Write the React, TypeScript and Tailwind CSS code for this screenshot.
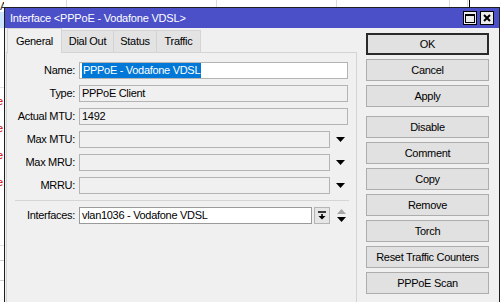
import React from "react";

const font = "font-['Liberation_Sans',Arial,sans-serif] text-[11px] tracking-[-0.3px] text-black";

const Arrow = () => (
  <svg width="9" height="5" viewBox="0 0 9 5">
    <path d="M0 0h9L4.5 5z" fill="#000" />
  </svg>
);

type FieldProps = {
  label: string;
  value?: string;
  white?: boolean;
  selected?: boolean;
  drop?: boolean;
};

const Field: React.FC<FieldProps> = ({ label, value, white, selected, drop }) => (
  <div className="flex items-center h-[17px]">
    <span className="w-[68px] text-right">{label}</span>
    <div
      className={`ml-[4px] h-[17px] border border-[#b4b4b4] pl-[2px] flex items-center ${
        drop ? "w-[251px]" : "w-[269px]"
      } ${white ? "bg-white border-[#9a9a9a]" : "bg-[#f0f0f0]"}`}
    >
      {selected ? (
        <span className="bg-[#0078d7] text-white px-[1px] leading-[15px]">{value}</span>
      ) : (
        <span>{value}</span>
      )}
    </div>
    {drop && (
      <div className="w-[20px] flex justify-center">
        <Arrow />
      </div>
    )}
  </div>
);

const buttons = ["Cancel", "Apply", "Disable", "Comment", "Copy", "Remove", "Torch", "Reset Traffic Counters", "PPPoE Scan"];

export default function App() {
  return (
    <div className={`relative w-[503px] h-[302px] overflow-hidden bg-white ${font}`}>
      {/* background list behind the dialog */}
      <div className="flex flex-col">
        <div className="h-[12px] flex">
          <span className="w-[4px] overflow-hidden leading-[12px] text-[#333]">A</span>
          <div className="w-[63px] border-r border-[#dcdcdc]" />
          <div className="w-[150px] border-r border-[#dcdcdc]" />
          <div className="w-[120px] border-r border-[#dcdcdc]" />
          <div className="w-[113px] border-r border-[#dcdcdc]" />
          <div className="w-[18px] border-r border-[#dcdcdc]" />
          <div className="w-[2px] border-r border-black" />
        </div>
        <div className="h-[16px] w-[4px] bg-[#cde6fb]" />
        <div className="h-[60px] w-[4px] border-b border-[#e4e4e4]" />
        {[0, 1, 2, 3].map((i) => (
          <div key={i} className="h-[27px] w-[4px] overflow-hidden flex items-center">
            <span className="text-[#d40000] -ml-[3px]">e</span>
          </div>
        ))}
        <div className="h-[50px] w-[4px] border-b border-[#e4e4e4]" />
        <div className="h-[15px] w-[4px] border-b border-[#cfcfcf]" />
        <div className="h-[20px] w-[4px] border-b border-[#cfcfcf]" />
      </div>

      {/* dialog window */}
      <div className="absolute left-[4px] top-[7px] w-[496px] h-[330px] border border-[#1e1e1e] bg-[#f0f0f0]">
        <div className="h-[20px] bg-[#4b50c9] flex items-center pl-[5px] pr-[5px] text-white tracking-[-0.2px]">
          <span className="flex-1">Interface &lt;PPPoE - Vodafone VDSL&gt;</span>
          <div className="flex gap-[3px]">
            <div className="w-[14px] h-[14px] bg-[#ececec] border border-black flex items-center justify-center">
              <div className="w-[10px] h-[9px] border border-black border-t-2" />
            </div>
            <div className="w-[14px] h-[14px] bg-[#ececec] border border-black flex items-center justify-center">
              <svg width="8" height="8" viewBox="0 0 8 8">
                <path d="M1 1L7 7M7 1L1 7" stroke="#000" strokeWidth="2" />
              </svg>
            </div>
          </div>
        </div>

        <div className="flex items-start">
          {/* tabs + page */}
          <div className="ml-[1px] w-[351px]">
            <div className="h-[24px] flex items-end pl-[1px]">
              <div className="w-[55px] h-[25px] bg-[#f0f0f0] border border-b-0 border-[#d4d4d4] flex items-center justify-center relative top-[1px]">
                General
              </div>
              <div className="w-[52px] h-[22px] bg-[#e3e3e3] border border-b-0 border-l-0 border-[#d4d4d4] flex items-center justify-center">
                Dial Out
              </div>
              <div className="w-[43px] h-[22px] bg-[#e3e3e3] border border-b-0 border-l-0 border-[#d4d4d4] flex items-center justify-center">
                Status
              </div>
              <div className="w-[44px] h-[22px] bg-[#e3e3e3] border border-b-0 border-l-0 border-[#d4d4d4] flex items-center justify-center">
                Traffic
              </div>
            </div>
            <div className="h-[280px] border border-[#d4d4d4] pt-[9px] flex flex-col gap-[6px]">
              <Field label="Name:" value="PPPoE - Vodafone VDSL" white selected />
              <Field label="Type:" value="PPPoE Client" />
              <Field label="Actual MTU:" value="1492" />
              <Field label="Max MTU:" drop />
              <Field label="Max MRU:" drop />
              <Field label="MRRU:" drop />
              <div className="h-px bg-[#d5d5d5] ml-[8px] w-[334px]" />
              <div className="flex items-center h-[17px]">
                <span className="w-[68px] text-right">Interfaces:</span>
                <div className="ml-[4px] w-[233px] h-[17px] bg-white border border-[#9a9a9a] pl-[2px] flex items-center">
                  vlan1036 - Vodafone VDSL
                </div>
                <div className="ml-[2px] w-[16px] h-[17px] bg-[#e6e6e6] border border-[#b4b4b4] flex items-center justify-center">
                  <svg width="8" height="9" viewBox="0 0 8 9">
                    <path d="M0 1h8" stroke="#000" strokeWidth="1.5" />
                    <path d="M3.2 3h1.6v2H7.5L4 8.5L0.5 5h2.7z" fill="#000" />
                  </svg>
                </div>
                <div className="w-[22px] flex justify-center">
                  <svg width="9" height="13" viewBox="0 0 9 13">
                    <path d="M0 5h9L4.5 0z" fill="#a6a6a6" />
                    <path d="M0 8h9L4.5 13z" fill="#000" />
                  </svg>
                </div>
              </div>
            </div>
          </div>

          {/* action buttons */}
          <div className="ml-[9px] mt-[5px] w-[123px] flex flex-col gap-[4px]">
            <div className="h-[22px] border-2 border-[#2a2a2a] bg-[#e1e1e1] flex items-center justify-center">OK</div>
            {buttons.map((b) => (
              <div
                key={b}
                className={`h-[22px] border border-[#adadad] bg-[#e1e1e1] flex items-center justify-center ${
                  b === "Disable" ? "mt-[5px]" : ""
                }`}
              >
                {b}
              </div>
            ))}
          </div>
        </div>
      </div>
    </div>
  );
}
